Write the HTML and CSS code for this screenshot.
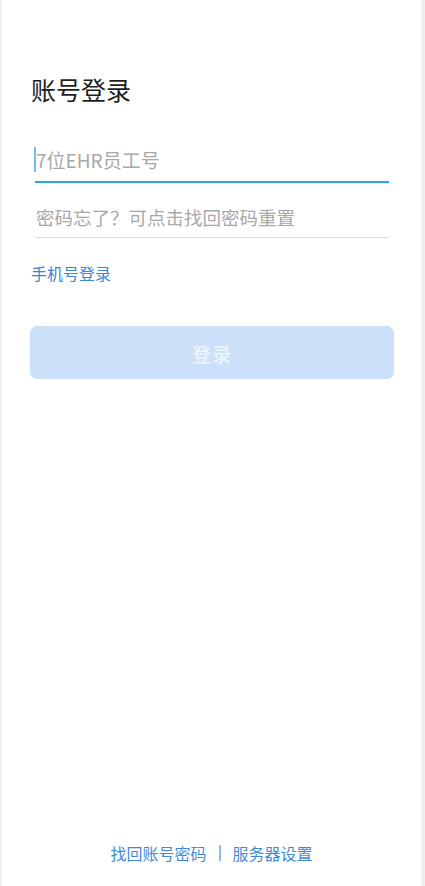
FILE: index.html
```html
<!DOCTYPE html>
<html lang="zh-CN">
<head>
<meta charset="utf-8">
<title>账号登录</title>
<link rel="stylesheet" href="styles.css">
</head>
<body>
<div class="page">
  <main class="form">
    <h1 class="title">账号登录</h1>
    <div class="field field-active">
      <span class="caret"></span>
      <span class="placeholder">7位EHR员工号</span>
    </div>
    <div class="field field-pass">
      <span class="placeholder placeholder-sm">密码忘了？可点击找回密码重置</span>
    </div>
    <a class="link" href="#">手机号登录</a>
    <button class="btn" type="button">登录</button>
  </main>
  <footer class="footer">
    <a class="foot-link" href="#">找回账号密码</a>
    <span class="sep"></span>
    <a class="foot-link" href="#">服务器设置</a>
  </footer>
</div>
</body>
</html>
```

FILE: styles.css
```css
* { box-sizing: border-box; }
html, body { margin: 0; padding: 0; background: #ffffff; }
body {
  font-family: "Noto Sans CJK SC", "Noto Sans", sans-serif;
}
.page {
  min-height: 100vh;
  display: flex;
  flex-direction: column;
  border-left: 2px solid #f0f0f0;
  border-right: 4px solid #f0f0f0;
  background: #fff;
}
.form {
  display: flex;
  flex-direction: column;
  padding: 0 27px 0 28px;
}
.title {
  margin: 77px 0 0 1px;
  font-size: 25px;
  line-height: 25px;
  font-weight: 400;
  color: #1e1e1e;
}
.field {
  position: relative;
  margin: 0 5px 0 5px;
  display: flex;
  align-items: center;
}
.field-active {
  padding: 48px 0 12px 1px;
  border-bottom: 2px solid #28a4f0;
}
.field-pass {
  padding: 25px 0 10px 1px;
  border-bottom: 1px solid #dedede;
}
.caret {
  position: absolute;
  left: -1px;
  top: 45px;
  width: 2px;
  height: 25px;
  background: #6cc0f2;
}
.placeholder {
  font-size: 19px;
  line-height: 19px;
  color: #a8a8a8;
}
.placeholder-sm {
  font-size: 18.5px;
}
.link {
  margin: 27px 0 0 1px;
  font-size: 16px;
  line-height: 16px;
  color: #3b86d8;
  text-decoration: none;
  align-self: flex-start;
}
.btn {
  margin: 45px 0 0 0;
  height: 53px;
  border: none;
  border-radius: 7px;
  background: #cce1f9;
  color: #eef5fd;
  font-family: inherit;
  font-size: 19px;
  font-weight: 500;
  letter-spacing: 1px;
  padding: 2px 0 0 0;
}
.footer {
  margin-top: auto;
  padding: 0 0 25px 0;
  display: flex;
  justify-content: center;
  align-items: center;
  gap: 12px;
}
.foot-link {
  font-size: 16px;
  line-height: 16px;
  color: #3f8ad8;
  text-decoration: none;
}
.sep {
  width: 2px;
  height: 16px;
  background: #8fbbe8;
}
```
